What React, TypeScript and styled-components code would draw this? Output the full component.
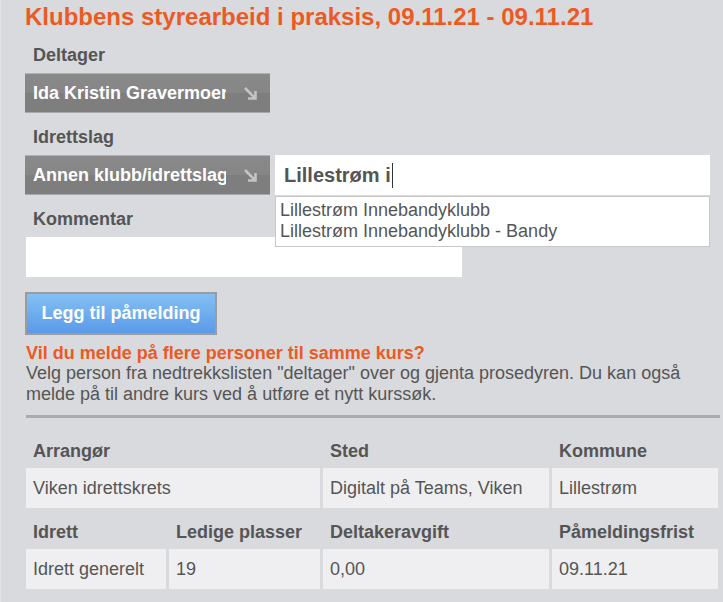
import React from "react";
import styled, { createGlobalStyle } from "styled-components";

const GlobalStyle = createGlobalStyle`
  html, body {
    margin: 0;
    padding: 0;
    background: #d9dadd;
  }
  body {
    font-family: "Liberation Sans", Arial, sans-serif;
    color: #555555;
  }
`;

const Page = styled.div`
  box-sizing: border-box;
  width: 723px;
  min-height: 602px;
  border-left: 1px solid #e4e4e6;
  padding: 0 3px 14px 24px;
`;

const Title = styled.h1`
  margin: 0;
  padding-top: 2px;
  font-size: 24px;
  line-height: 29px;
  font-weight: 700;
  color: #ec5a24;
`;

const Label = styled.label`
  display: block;
  padding: 14px 8px 8px;
  font-size: 18px;
  line-height: 20px;
  font-weight: 700;
  color: #555555;
`;

const Row = styled.div`
  position: relative;
  display: flex;
  gap: 5px;
  width: 685px;
`;

const Select = styled.div`
  box-sizing: border-box;
  width: 245px;
  height: 40px;
  display: flex;
  align-items: center;
  justify-content: space-between;
  padding: 0 12px 0 8px;
  background: linear-gradient(#898989 0, #868686 50%, #7e7e7e 50%, #7e7e7e 100%);
  border-top: 1px solid #b2b2b2;
  border-bottom: 1px solid #a9a9a9;
  cursor: pointer;
`;

const SelectText = styled.span`
  width: 193px;
  overflow: hidden;
  white-space: nowrap;
  font-size: 18px;
  font-weight: 700;
  color: #ffffff;
`;

const SearchInput = styled.div`
  box-sizing: border-box;
  flex: 1;
  height: 40px;
  display: flex;
  align-items: center;
  padding: 0 9px;
  background: #ffffff;
  font-size: 20px;
  font-weight: 700;
  color: #555555;
`;

const Caret = styled.span`
  display: inline-block;
  width: 1px;
  height: 25px;
  margin-left: 1px;
  background: #333333;
  vertical-align: middle;
`;

const Suggestions = styled.ul`
  position: absolute;
  left: 250px;
  right: 0;
  top: 41px;
  margin: 0;
  padding: 3px 4px 4px;
  list-style: none;
  background: #ffffff;
  border: 1px solid #c8c8c8;
  z-index: 2;
`;

const Suggestion = styled.li`
  font-size: 18px;
  line-height: 21px;
  color: #555555;
`;

const Comment = styled.div`
  width: 436px;
  height: 40px;
  margin-left: 1px;
  background: #ffffff;
`;

const AddButton = styled.button`
  box-sizing: border-box;
  width: 192px;
  height: 43px;
  margin-top: 15px;
  border: 2px solid #9b9c9e;
  background: linear-gradient(#84c0f3, #5a9ae9);
  color: #ffffff;
  font-family: "Liberation Sans", Arial, sans-serif;
  font-size: 18px;
  font-weight: 700;
  cursor: pointer;
`;

const Question = styled.p`
  margin: 8px 0 0 1px;
  font-size: 18px;
  line-height: 20px;
  font-weight: 700;
  color: #ec5a24;
`;

const Help = styled.p`
  margin: 0 0 0 1px;
  font-size: 18px;
  line-height: 21px;
  color: #555555;
`;

const Divider = styled.hr`
  margin: 10px 0 0 1px;
  height: 3px;
  border: 0;
  background: #ababad;
`;

const InfoGrid = styled.div`
  display: grid;
  grid-template-columns: 140px 151px 226px 1fr;
  gap: 3px;
  margin: 12px 2px 0 1px;
`;

const HeadCell = styled.div<{ $span?: number }>`
  grid-column: span ${(p) => p.$span || 1};
  height: 35px;
  box-sizing: border-box;
  padding: 11px 7px 0;
  font-size: 18px;
  line-height: 20px;
  font-weight: 700;
  white-space: nowrap;
  color: #555555;
`;

const DataCell = styled.div<{ $span?: number }>`
  grid-column: span ${(p) => p.$span || 1};
  height: 40px;
  display: flex;
  align-items: center;
  padding: 0 7px;
  background: #efeff1;
  font-size: 18px;
  white-space: nowrap;
  color: #555555;
`;

const Arrow = () => (
  <svg width="15" height="15" viewBox="0 0 15 15">
    <path
      d="M2 2 L12.5 12.5 M5 12.5 H12.5 V5"
      fill="none"
      stroke="#c4c4c4"
      strokeWidth="2.6"
    />
  </svg>
);

const App = () => {
  return (
    <Page>
      <GlobalStyle />
      <Title>Klubbens styrearbeid i praksis, 09.11.21 - 09.11.21</Title>

      <Label>Deltager</Label>
      <Row>
        <Select>
          <SelectText>Ida Kristin Gravermoen</SelectText>
          <Arrow />
        </Select>
      </Row>

      <Label>Idrettslag</Label>
      <Row>
        <Select>
          <SelectText>Annen klubb/idrettslag</SelectText>
          <Arrow />
        </Select>
        <SearchInput>
          Lillestrøm i<Caret />
        </SearchInput>
        <Suggestions>
          <Suggestion>Lillestrøm Innebandyklubb</Suggestion>
          <Suggestion>Lillestrøm Innebandyklubb - Bandy</Suggestion>
        </Suggestions>
      </Row>

      <Label>Kommentar</Label>
      <Comment />

      <AddButton>Legg til påmelding</AddButton>

      <Question>Vil du melde på flere personer til samme kurs?</Question>
      <Help>
        Velg person fra nedtrekkslisten "deltager" over og gjenta prosedyren. Du kan også
        melde på til andre kurs ved å utføre et nytt kurssøk.
      </Help>
      <Divider />

      <InfoGrid>
        <HeadCell $span={2}>Arrangør</HeadCell>
        <HeadCell>Sted</HeadCell>
        <HeadCell>Kommune</HeadCell>
        <DataCell $span={2}>Viken idrettskrets</DataCell>
        <DataCell>Digitalt på Teams, Viken</DataCell>
        <DataCell>Lillestrøm</DataCell>

        <HeadCell>Idrett</HeadCell>
        <HeadCell>Ledige plasser</HeadCell>
        <HeadCell>Deltakeravgift</HeadCell>
        <HeadCell>Påmeldingsfrist</HeadCell>
        <DataCell>Idrett generelt</DataCell>
        <DataCell>19</DataCell>
        <DataCell>0,00</DataCell>
        <DataCell>09.11.21</DataCell>
      </InfoGrid>
    </Page>
  );
};

export default App;
